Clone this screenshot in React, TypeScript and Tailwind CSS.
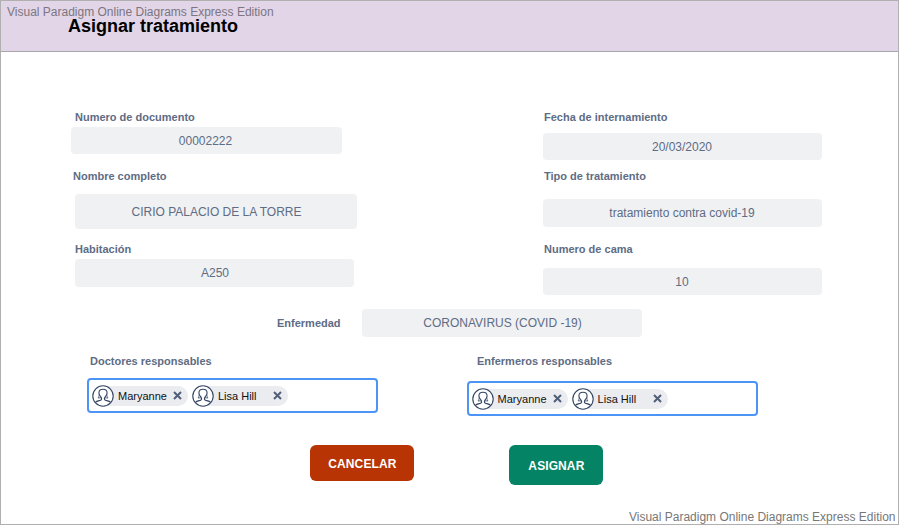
import type { ReactNode } from "react";

function Label({ className, children }: { className: string; children: ReactNode }) {
  return (
    <div className={`h-[14px] whitespace-nowrap text-[11px] leading-[14px] font-bold text-[#5e6c84] ${className}`}>
      {children}
    </div>
  );
}

function Value({ className, children }: { className: string; children: ReactNode }) {
  return (
    <div className={`flex items-center justify-center rounded-[4px] bg-[#f0f1f3] text-xs text-[#5e6c84] ${className}`}>
      {children}
    </div>
  );
}

function Avatar() {
  return (
    <svg className="h-[22px] w-[22px] shrink-0" viewBox="0 0 22 22" fill="none" stroke="#344563" strokeWidth="1.1">
      <circle cx="11" cy="11" r="10.2" fill="#fff" />
      <path d="M3.4 17.6 C4.4 15.8 6.6 15.8 8.2 15.4 C10 14.9 9.9 13.4 9 12.2 C7.6 10.6 6.9 9.6 6.9 8 C6.9 5.8 8.6 4.2 11 4.2 C13.4 4.2 15.1 5.8 15.1 8 C15.1 9.6 14.4 10.6 13 12.2 C12.1 13.4 12 14.9 13.8 15.4 C15.4 15.8 17.6 15.8 18.6 17.6" />
      <path d="M7.1 9.5 C7.1 11 6.9 12 6 12.9 H9.2 M14.9 9.5 C14.9 11 15.1 12 16 12.9 H12.8" strokeWidth="0.8" />
    </svg>
  );
}

function Chip({ name }: { name: string }) {
  return (
    <div className="flex h-5 w-24 items-center rounded-full bg-[#ebecf0]">
      <Avatar />
      <span className="ml-1 flex-1 whitespace-nowrap text-[11px] leading-[14px] text-[#111]">{name}</span>
      <svg className="mr-[6px] h-[9px] w-[9px] shrink-0" viewBox="0 0 9 9" stroke="#505f79" strokeWidth="2">
        <path d="M1 1 L8 8 M8 1 L1 8" />
      </svg>
    </div>
  );
}

function People() {
  return (
    <div className="flex h-[35px] w-[291px] items-center gap-1 rounded-[4px] border-2 border-[#4c94f5] pl-[3px]">
      <Chip name="Maryanne" />
      <Chip name="Lisa Hill" />
    </div>
  );
}

export default function App() {
  return (
    <div className="h-[527px] w-[901px] bg-white font-['Liberation_Sans',Arial,sans-serif]">
      <div className="flex h-[525px] w-[899px] flex-col border border-[#b0b0b0]">
        <header className="h-[51px] shrink-0 border-b border-[#aaa5ac] bg-[#e1d5e7]">
          <div className="h-[14px] pt-1 pl-[6px] text-xs leading-[14px] text-[#7d7680]">
            Visual Paradigm Online Diagrams Express Edition
          </div>
          <h1 className="pl-[67px] text-lg leading-[22px] font-bold text-black">Asignar tratamiento</h1>
        </header>

        <main className="flex flex-1 flex-col">
          <div className="flex h-[257px] pt-[58px]">
            <section className="ml-[70px] w-[472px]">
              <Label className="ml-1">Numero de documento</Label>
              <Value className="mt-[3px] h-[27px] w-[271px] pr-[2px]">00002222</Value>
              <Label className="mt-[15px] ml-[2px]">Nombre completo</Label>
              <Value className="mt-[11px] ml-1 h-[35px] w-[282px] pl-[1px]">CIRIO PALACIO DE LA TORRE</Value>
              <Label className="mt-[13px] ml-1">Habitación</Label>
              <Value className="mt-[3px] ml-1 h-7 w-[279px] pl-[1px]">A250</Value>
            </section>
            <section className="w-[279px]">
              <Label className="ml-[1px]">Fecha de internamiento</Label>
              <Value className="mt-[9px] h-[27px] pr-[1px]">20/03/2020</Value>
              <Label className="mt-[9px] ml-[1px]">Tipo de tratamiento</Label>
              <Value className="mt-4 h-7 pr-[1px]">tratamiento contra covid-19</Value>
              <Label className="mt-[15px] ml-[1px]">Numero de cama</Label>
              <Value className="mt-[12px] h-[27px] pr-[1px]">10</Value>
            </section>
          </div>

          <div className="flex h-7 items-center pl-[276px]">
            <Label className="w-[85px]">Enfermedad</Label>
            <Value className="h-7 w-[280px] pl-[1px]">CORONAVIRUS (COVID -19)</Value>
          </div>

          <div className="mt-[17px] flex pl-[86px]">
            <section className="w-[379.6px]">
              <Label className="mb-[10px] ml-[3px]">Doctores responsables</Label>
              <People />
            </section>
            <section>
              <Label className="mb-[13px] ml-[10.4px]">Enfermeros responsables</Label>
              <People />
            </section>
          </div>

          <div className="mt-[29px] flex items-start gap-[95px] pl-[309.4px] text-xs font-bold text-white">
            <button className="h-9 w-[104px] rounded-[6px] bg-[#b93404] pt-[1px]">
              <span className="tracking-[0.1px]">CANCELAR</span>
            </button>
            <button className="h-10 w-[94px] rounded-[6px] bg-[#048464] pt-[1px]">
              <span className="tracking-[0.1px]">ASIGNAR</span>
            </button>
          </div>

          <footer className="mt-auto pr-[2.5px] text-right text-xs leading-[14px] text-[#777]">
            Visual Paradigm Online Diagrams Express Edition
          </footer>
        </main>
      </div>
    </div>
  );
}
